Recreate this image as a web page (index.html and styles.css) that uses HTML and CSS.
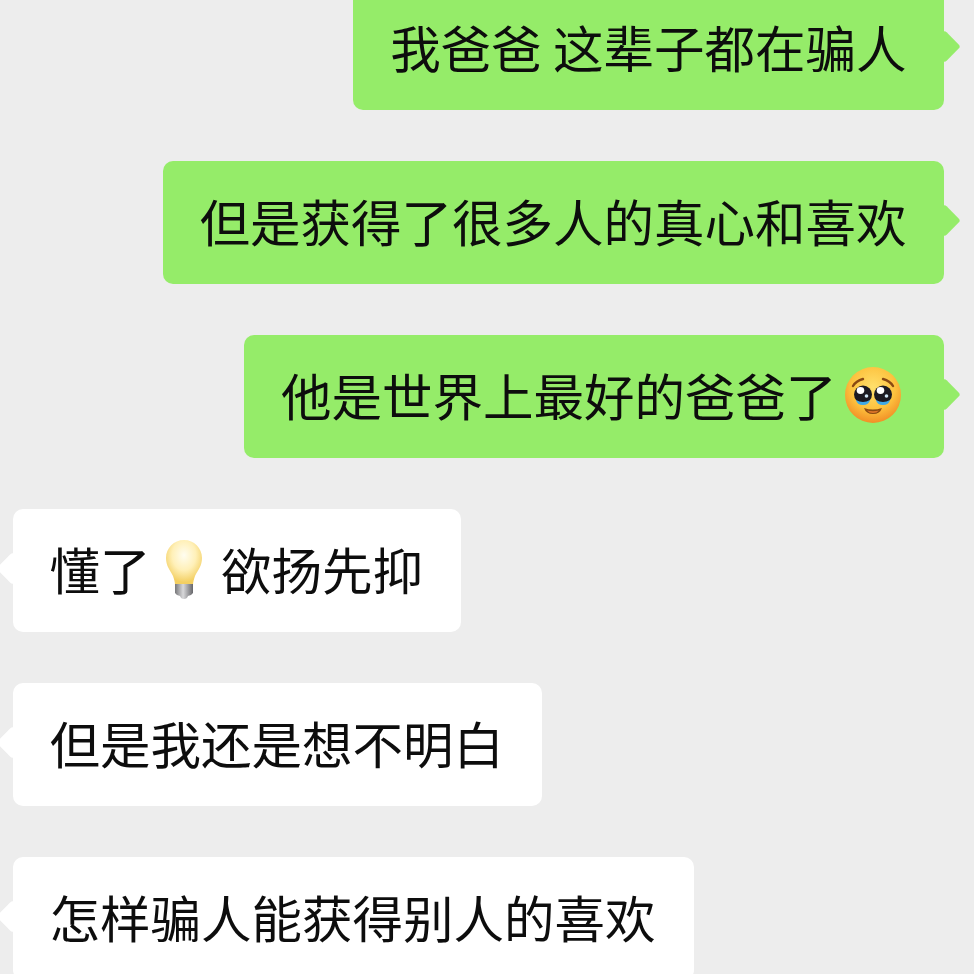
FILE: index.html
```html
<!DOCTYPE html>
<html lang="zh-CN">
<head>
    <meta charset="UTF-8">
    <title>聊天记录</title>
    <link rel="stylesheet" href="styles.css">
</head>
<body>
    <div class="chat">
        <div class="bubble me">我爸爸 这辈子都在骗人</div>
        <div class="bubble me">但是获得了很多人的真心和喜欢</div>
        <div class="bubble me">他是世界上最好的爸爸了<svg class="face" viewBox="0 0 56 56" aria-hidden="true">
                <defs>
                    <radialGradient id="skin" cx="50%" cy="36%" r="66%">
                        <stop offset="0" stop-color="#ffe06c"/>
                        <stop offset="0.6" stop-color="#fdc23e"/>
                        <stop offset="1" stop-color="#f08a24"/>
                    </radialGradient>
                </defs>
                <circle cx="28" cy="28" r="28" fill="url(#skin)"/>
                <path d="M8 19q3-5 10-7" fill="none" stroke="#8a4a12" stroke-width="2.400" stroke-linecap="round"/>
                <path d="M48 19q-3-5-10-7" fill="none" stroke="#8a4a12" stroke-width="2.400" stroke-linecap="round"/>
                <circle cx="18" cy="27.500" r="9" fill="#1c1a22"/>
                <circle cx="38" cy="27.500" r="9" fill="#1c1a22"/>
                <ellipse cx="15.500" cy="23.500" rx="3.800" ry="3.400" fill="#fff"/>
                <ellipse cx="35.500" cy="23.500" rx="3.800" ry="3.400" fill="#fff"/>
                <circle cx="21.500" cy="29" r="1.800" fill="#cfe6f5"/>
                <circle cx="41.500" cy="29" r="1.800" fill="#cfe6f5"/>
                <path d="M11 33q7 4 14 0q-1 5-7 5t-7-5z" fill="#3fa9e6"/>
                <path d="M31 33q7 4 14 0q-1 5-7 5t-7-5z" fill="#3fa9e6"/>
                <path d="M19 41q9 3 18 0q-2 6-9 6t-9-6z" fill="#8a4a12"/>
                <path d="M22 43.500q6 1.500 12 0q-2 2.500-6 2.500t-6-2.500z" fill="#e0762a"/>
            </svg></div>
        <div class="bubble other">懂了 <svg class="bulb" viewBox="0 0 48 60" aria-hidden="true">
                <defs>
                    <radialGradient id="glass" cx="50%" cy="34%" r="60%">
                        <stop offset="0" stop-color="#fffdf0"/>
                        <stop offset="0.55" stop-color="#fff0b8"/>
                        <stop offset="1" stop-color="#f3cf62"/>
                    </radialGradient>
                    <linearGradient id="base" x1="0" x2="1" y1="0" y2="0">
                        <stop offset="0" stop-color="#77777a"/>
                        <stop offset="0.45" stop-color="#d8d8da"/>
                        <stop offset="1" stop-color="#66666a"/>
                    </linearGradient>
                </defs>
                <path d="M22 0c10 0 18 8 18 18 0 8-4 12-7 18-1 3-2 6-2 9H13c0-3-1-6-2-9-3-6-7-10-7-18C4 8 12 0 22 0z" fill="url(#glass)"/>
                <path d="M13 44h18v9q-2 3-5 3-1 3-4 3t-4-3q-3 0-5-3z" fill="url(#base)"/>
            </svg> 欲扬先抑</div>
        <div class="bubble other">但是我还是想不明白</div>
        <div class="bubble other">怎样骗人能获得别人的喜欢</div>
    </div>
</body>
</html>
```

FILE: styles.css
```css
* {
    margin: 0;
    padding: 0;
    box-sizing: border-box;
}

html, body {
    height: 100%;
    overflow: hidden;
}

body {
    background: #ededed;
    font-family: "Noto Sans CJK SC", "Liberation Sans", sans-serif;
}

.chat {
    display: flex;
    flex-direction: column;
    gap: 51px;
    margin-top: -13px;
    padding: 0 30px 0 13px;
}

.bubble {
    position: relative;
    font-size: 50.5px;
    line-height: 119px;
    height: 123px;
    white-space: nowrap;
    color: #0d0d0d;
    border-radius: 10px;
}

.bubble::after {
    content: "";
    position: absolute;
    top: calc(50% - 14px);
    width: 23px;
    height: 23px;
    border-radius: 3px;
    background: inherit;
    transform: rotate(45deg);
}

.me {
    align-self: flex-end;
    padding: 0 37.500px 0 37px;
    background: #95ec69;
}

.me::after {
    right: -12px;
}

.other {
    align-self: flex-start;
    padding: 0 38px 0 36.500px;
    background: #fff;
}

.other::after {
    left: -12px;
}

.face {
    width: 56px;
    height: 56px;
    margin: 0 6px 14px 8px;
    vertical-align: middle;
}

.bulb {
    width: 48px;
    height: 60px;
    margin-bottom: 12px;
    vertical-align: middle;
}
```
